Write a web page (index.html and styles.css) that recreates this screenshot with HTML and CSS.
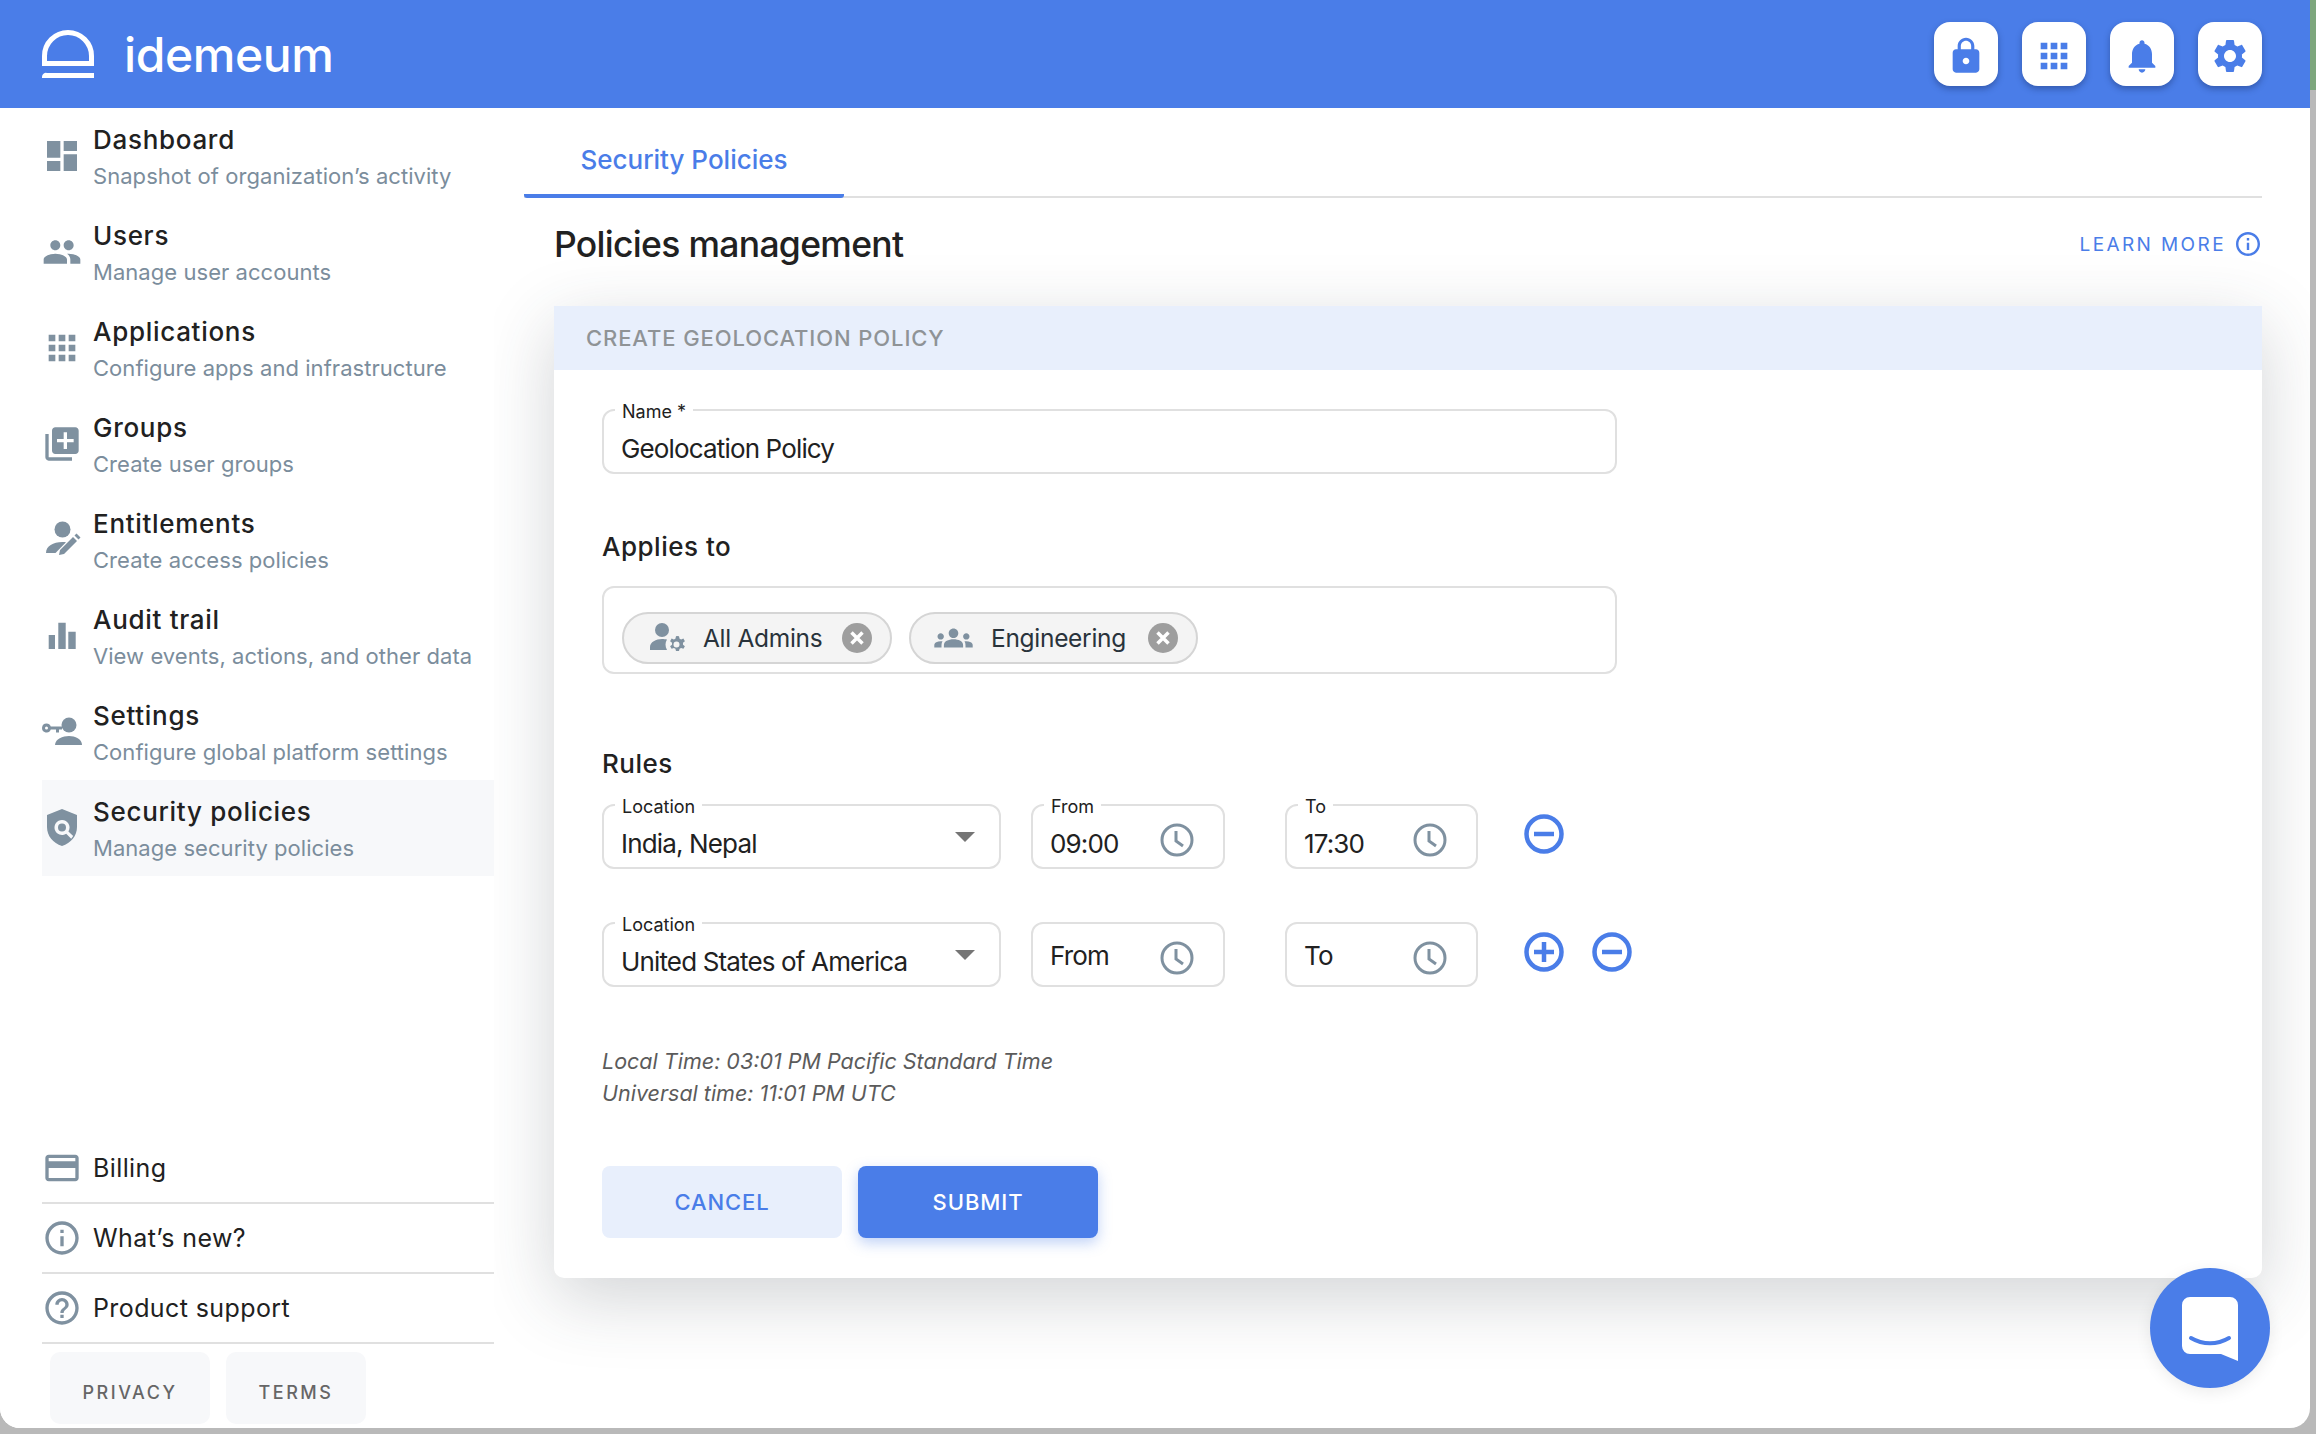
FILE: index.html
```html
<!DOCTYPE html>
<html>
<head>
  <title>idemeum - Security Policies</title>
  <link rel="stylesheet" href="styles.css">
</head>
<body>
  <div class="window">
    <header class="topbar">
      <div class="brand">
        <svg class="brand-logo" viewBox="0 0 52 48"><path d="M2.5 33.5V26a23.5 23.5 0 0 1 47 0v7.5z" fill="none" stroke="#fff" stroke-width="5"/><path d="M5 43h47v5H0v-1a4 4 0 0 1 5-4z" fill="#fff"/></svg>
        <span class="brand-name">idemeum</span>
      </div>
      <div class="top-actions">
        <button class="top-btn"><svg viewBox="0 0 24 24"><path d="M18 8h-1V6c0-2.76-2.24-5-5-5S7 3.24 7 6v2H6c-1.1 0-2 .9-2 2v10c0 1.1.9 2 2 2h12c1.1 0 2-.9 2-2V10c0-1.1-.9-2-2-2zm-6 9c-1.1 0-2-.9-2-2s.9-2 2-2 2 .9 2 2-.9 2-2 2zm3.1-9H8.9V6c0-1.71 1.39-3.1 3.1-3.1 1.71 0 3.1 1.39 3.1 3.1v2z"/></svg></button>
        <button class="top-btn"><svg viewBox="0 0 24 24"><path d="M4 8h4V4H4v4zm6 12h4v-4h-4v4zm-6 0h4v-4H4v4zm0-6h4v-4H4v4zm6 0h4v-4h-4v4zm6-10v4h4V4h-4zm-6 4h4V4h-4v4zm6 6h4v-4h-4v4zm0 6h4v-4h-4v4z"/></svg></button>
        <button class="top-btn"><svg viewBox="0 0 24 24"><path d="M12 22c1.1 0 2-.9 2-2h-4c0 1.1.89 2 2 2zm6-6v-5c0-3.07-1.64-5.64-4.5-6.32V4c0-.83-.67-1.5-1.5-1.5s-1.5.67-1.5 1.5v.68C7.63 5.36 6 7.92 6 11v5l-2 2v1h16v-1l-2-2z"/></svg></button>
        <button class="top-btn"><svg viewBox="0 0 24 24"><path d="M19.14 12.94c.04-.3.06-.61.06-.94 0-.32-.02-.64-.07-.94l2.03-1.58c.18-.14.23-.41.12-.61l-1.92-3.32c-.12-.22-.37-.29-.59-.22l-2.39.96c-.5-.38-1.03-.7-1.62-.94l-.36-2.54c-.04-.24-.24-.41-.48-.41h-3.84c-.24 0-.43.17-.47.41l-.36 2.54c-.59.24-1.13.57-1.62.94l-2.39-.96c-.22-.08-.47 0-.59.22L2.74 8.87c-.12.21-.08.47.12.61l2.03 1.58c-.05.3-.09.63-.09.94s.02.64.07.94l-2.03 1.58c-.18.14-.23.41-.12.61l1.92 3.32c.12.22.37.29.59.22l2.39-.96c.5.38 1.03.7 1.62.94l.36 2.54c.05.24.24.41.48.41h3.84c.24 0 .44-.17.47-.41l.36-2.54c.59-.24 1.13-.56 1.62-.94l2.39.96c.22.08.47 0 .59-.22l1.92-3.32c.12-.22.07-.47-.12-.61l-2.01-1.58zM12 15.6c-1.98 0-3.6-1.62-3.6-3.6s1.62-3.6 3.6-3.6 3.6 1.62 3.6 3.6-1.62 3.6-3.6 3.6z"/></svg></button>
      </div>
    </header>

    <div class="content">
      <aside class="sidebar">
        <nav class="nav">
          <a class="nav-item">
            <svg class="nav-icon" viewBox="0 0 24 24"><path d="M3 13h8V3H3v10zm0 8h8v-6H3v6zm10 0h8V11h-8v10zm0-18v6h8V3h-8z"/></svg>
            <span class="nav-text"><span class="nav-title">Dashboard</span><span class="nav-sub">Snapshot of organization’s activity</span></span>
          </a>
          <a class="nav-item">
            <svg class="nav-icon" viewBox="0 0 24 24"><path d="M16 11c1.66 0 2.99-1.34 2.99-3S17.66 5 16 5c-1.66 0-3 1.34-3 3s1.34 3 3 3zm-8 0c1.66 0 2.99-1.34 2.99-3S9.66 5 8 5C6.34 5 5 6.34 5 8s1.34 3 3 3zm0 2c-2.33 0-7 1.17-7 3.5V19h14v-2.5c0-2.33-4.67-3.5-7-3.5zm8 0c-.29 0-.62.02-.97.05 1.16.84 1.97 1.97 1.97 3.45V19h6v-2.5c0-2.33-4.67-3.5-7-3.5z"/></svg>
            <span class="nav-text"><span class="nav-title">Users</span><span class="nav-sub">Manage user accounts</span></span>
          </a>
          <a class="nav-item">
            <svg class="nav-icon" viewBox="0 0 24 24"><path d="M4 8h4V4H4v4zm6 12h4v-4h-4v4zm-6 0h4v-4H4v4zm0-6h4v-4H4v4zm6 0h4v-4h-4v4zm6-10v4h4V4h-4zm-6 4h4V4h-4v4zm6 6h4v-4h-4v4zm0 6h4v-4h-4v4z"/></svg>
            <span class="nav-text"><span class="nav-title">Applications</span><span class="nav-sub">Configure apps and infrastructure</span></span>
          </a>
          <a class="nav-item">
            <svg class="nav-icon" viewBox="0 0 24 24"><path d="M4 6H2v14c0 1.1.9 2 2 2h14v-2H4V6zm16-4H8c-1.1 0-2 .9-2 2v12c0 1.1.9 2 2 2h12c1.1 0 2-.9 2-2V4c0-1.1-.9-2-2-2zm-1 9h-4v4h-2v-4H9V9h4V5h2v4h4v2z"/></svg>
            <span class="nav-text"><span class="nav-title">Groups</span><span class="nav-sub">Create user groups</span></span>
          </a>
          <a class="nav-item">
            <svg class="nav-icon" viewBox="0 0 40 40"><circle cx="20.500" cy="9.500" r="8"/><path d="M4 33c0-7 7-11 16.500-11 1.500 0 2.500.1 3.500.3L13.500 33z"/><path d="M17 35l1-5 13-13 4 4-13 13zM32.500 15.500l2-2 4 4-2 2z"/></svg>
            <span class="nav-text"><span class="nav-title">Entitlements</span><span class="nav-sub">Create access policies</span></span>
          </a>
          <a class="nav-item">
            <svg class="nav-icon" viewBox="0 0 40 40"><path d="M6.700 19H13v14H6.700zM16.300 6.700h7.400V33h-7.400zM26.300 15.700h7.400V33h-7.400z"/></svg>
            <span class="nav-text"><span class="nav-title">Audit trail</span><span class="nav-sub">View events, actions, and other data</span></span>
          </a>
          <a class="nav-item">
            <svg class="nav-icon" viewBox="0 0 40 40"><circle cx="27" cy="13" r="7.500"/><path d="M13 33c0-6 8-9 14-9s13 3 13 9z"/><path d="M4.500 11.500a4.500 4.500 0 0 1 4.300 3h11.200v3h-3v3h-3v-3H8.800a4.500 4.500 0 1 1-4.300-6zm0 3a1.500 1.500 0 1 0 0 3 1.500 1.500 0 0 0 0-3z"/></svg>
            <span class="nav-text"><span class="nav-title">Settings</span><span class="nav-sub">Configure global platform settings</span></span>
          </a>
          <a class="nav-item active">
            <svg class="nav-icon" viewBox="0 0 40 40"><path fill-rule="evenodd" d="M20 1l15 6v12c0 9-6 16-15 19C11 35 5 28 5 19V7zm0 11a7.500 7.500 0 1 0 4.200 13.700l5 5 2-2.700-4.800-4.600A7.500 7.500 0 0 0 20 12zm0 3.500a4 4 0 1 1 0 8 4 4 0 0 1 0-8z"/></svg>
            <span class="nav-text"><span class="nav-title">Security policies</span><span class="nav-sub">Manage security policies</span></span>
          </a>
        </nav>

        <div class="side-bottom">
          <a class="side-link">
            <svg class="nav-icon" viewBox="0 0 24 24"><path d="M20 4H4c-1.110 0-1.990.89-1.990 2L2 18c0 1.110.89 2 2 2h16c1.110 0 2-.89 2-2V6c0-1.110-.89-2-2-2zm0 14H4v-6h16v6zm0-10H4V6h16v2z"/></svg>
            Billing
          </a>
          <a class="side-link">
            <svg class="nav-icon" viewBox="0 0 24 24"><path d="M11 7h2v2h-2zm0 4h2v6h-2zm1-9C6.480 2 2 6.480 2 12s4.480 10 10 10 10-4.480 10-10S17.520 2 12 2zm0 18c-4.410 0-8-3.590-8-8s3.590-8 8-8 8 3.590 8 8-3.590 8-8 8z"/></svg>
            What’s new?
          </a>
          <a class="side-link">
            <svg class="nav-icon" viewBox="0 0 24 24"><path d="M11 18h2v-2h-2v2zm1-16C6.480 2 2 6.480 2 12s4.480 10 10 10 10-4.480 10-10S17.520 2 12 2zm0 18c-4.410 0-8-3.590-8-8s3.590-8 8-8 8 3.590 8 8-3.590 8-8 8zm0-14c-2.210 0-4 1.790-4 4h2c0-1.100.9-2 2-2s2 .9 2 2c0 2-3 1.750-3 5h2c0-2.250 3-2.500 3-5 0-2.210-1.790-4-4-4z"/></svg>
            Product support
          </a>
          <div class="legal">
            <button class="legal-btn privacy">PRIVACY</button>
            <button class="legal-btn terms">TERMS</button>
          </div>
        </div>
      </aside>

      <main class="main">
        <div class="tabs"><div class="tab">Security Policies</div></div>

        <div class="title-row">
          <h1 class="page-title">Policies management</h1>
          <a class="learn-more">LEARN MORE
            <svg viewBox="2 2 20 20"><path d="M11 7h2v2h-2zm0 4h2v6h-2zm1-9C6.480 2 2 6.480 2 12s4.480 10 10 10 10-4.480 10-10S17.520 2 12 2zm0 18c-4.410 0-8-3.590-8-8s3.590-8 8-8 8 3.590 8 8-3.590 8-8 8z"/></svg>
          </a>
        </div>

        <section class="card">
          <div class="card-head">CREATE GEOLOCATION POLICY</div>
          <div class="card-body">
            <div class="field name-field">
              <span class="field-label">Name *</span>
              <span class="field-value">Geolocation Policy</span>
            </div>

            <h3 class="section-label applies">Applies to</h3>
            <div class="chips">
              <span class="chip chip-admins">
                <svg class="chip-icon" viewBox="0 0 36 32"><circle cx="12" cy="8" r="7"/><path d="M0 28v-3c0-5 6-8 12-8 2 0 3 .2 5 .6-2 3-2 7 0 10.400z"/><path fill-rule="evenodd" d="M27 14l2 .3.600 2.400 1.500.8 2.300-.9 1.500 2.600-1.900 1.500v2l1.900 1.500-1.500 2.600-2.300-.9-1.500.8-.6 2.300h-3l-.6-2.300-1.500-.8-2.300.9-1.500-2.600 1.900-1.500v-2l-1.900-1.500 1.500-2.600 2.300.9 1.500-.8.6-2.400zm-.500 5.500a3 3 0 1 0 0 6 3 3 0 0 0 0-6z"/></svg>
                <span class="chip-text">All Admins</span>
                <span class="chip-x"><svg viewBox="0 0 30 30"><path d="M9.500 9.500l11 11M20.500 9.500l-11 11"/></svg></span>
              </span>
              <span class="chip chip-eng">
                <svg class="chip-icon wide" viewBox="0 2 24 20"><path d="M12 12.750c1.630 0 3.070.39 4.240.9 1.080.48 1.760 1.560 1.760 2.730V18H6v-1.610c0-1.180.68-2.260 1.760-2.730 1.170-.52 2.610-.91 4.240-.91zM4 13c1.100 0 2-.9 2-2s-.9-2-2-2-2 .9-2 2 .9 2 2 2zm1.130 1.100c-.37-.06-.74-.1-1.130-.1-.99 0-1.930.21-2.780.58C.48 14.900 0 15.620 0 16.430V18h4.500v-1.610c0-.83.23-1.610.63-2.290zM20 13c1.100 0 2-.9 2-2s-.9-2-2-2-2 .9-2 2 .9 2 2 2zm4 3.430c0-.81-.48-1.530-1.220-1.850-.85-.37-1.790-.58-2.780-.58-.39 0-.76.04-1.130.1.4.68.63 1.460.63 2.290V18H24v-1.570zM12 6c1.660 0 3 1.340 3 3s-1.340 3-3 3-3-1.340-3-3 1.340-3 3-3z"/></svg>
                <span class="chip-text">Engineering</span>
                <span class="chip-x"><svg viewBox="0 0 30 30"><path d="M9.500 9.500l11 11M20.500 9.500l-11 11"/></svg></span>
              </span>
            </div>

            <h3 class="section-label rules-label">Rules</h3>
            <div class="rule">
              <div class="field loc-field">
                <span class="field-label">Location</span>
                <span class="field-value">India, Nepal</span>
                <span class="caret"></span>
              </div>
              <div class="field time-field from-field">
                <span class="field-label">From</span>
                <span class="field-value">09:00</span>
                <svg class="clock" viewBox="0 0 34 34"><circle cx="17" cy="17" r="15"/><path d="M16 8v10l7 5"/></svg>
              </div>
              <div class="field time-field to-field">
                <span class="field-label">To</span>
                <span class="field-value">17:30</span>
                <svg class="clock" viewBox="0 0 34 34"><circle cx="17" cy="17" r="15"/><path d="M16 8v10l7 5"/></svg>
              </div>
              <div class="rule-actions">
                <svg class="round-btn" viewBox="0 0 40 40"><circle cx="20" cy="20" r="17.500"/><path d="M10 20h20"/></svg>
              </div>
            </div>
            <div class="rule rule-two">
              <div class="field loc-field">
                <span class="field-label">Location</span>
                <span class="field-value">United States of America</span>
                <span class="caret"></span>
              </div>
              <div class="field time-field from-field empty">
                <span class="field-value">From</span>
                <svg class="clock" viewBox="0 0 34 34"><circle cx="17" cy="17" r="15"/><path d="M16 8v10l7 5"/></svg>
              </div>
              <div class="field time-field to-field empty">
                <span class="field-value">To</span>
                <svg class="clock" viewBox="0 0 34 34"><circle cx="17" cy="17" r="15"/><path d="M16 8v10l7 5"/></svg>
              </div>
              <div class="rule-actions">
                <svg class="round-btn" viewBox="0 0 40 40"><circle cx="20" cy="20" r="17.500"/><path d="M10 20h20M20 10v20"/></svg>
                <svg class="round-btn" viewBox="0 0 40 40"><circle cx="20" cy="20" r="17.500"/><path d="M10 20h20"/></svg>
              </div>
            </div>

            <p class="time-note">Local Time: 03:01 PM Pacific Standard Time<br>Universal time: 11:01 PM UTC</p>

            <div class="form-actions">
              <button class="btn btn-cancel">CANCEL</button>
              <button class="btn btn-submit">SUBMIT</button>
            </div>
          </div>
        </section>
      </main>

      <button class="chat-btn">
        <svg viewBox="0 0 56 64"><path d="M8 0h40a8 8 0 0 1 8 8v56l-17-7H8a8 8 0 0 1-8-8V8a8 8 0 0 1 8-8z" fill="#fff"/><path d="M9 41c12 7 26 7 38 0" fill="none" stroke="#4a7de8" stroke-width="4" stroke-linecap="round"/></svg>
      </button>
    </div>
  </div>
</body>
</html>
```

FILE: styles.css
```css
* {
  box-sizing: border-box;
}

body {
  margin: 0;
  width: 2316px;
  height: 1434px;
  overflow: hidden;
  background: linear-gradient(#7da67d 0, #7da67d 90px, #b9b9b9 90px);
  font-family: Inter, "Open Sans", sans-serif;
  color: #212121;
}

.window {
  width: 2310px;
  height: 1428px;
  background: #fff;
  border-radius: 0 0 20px 20px;
  overflow: hidden;
  display: flex;
  flex-direction: column;
}

/* top bar */
.topbar {
  height: 108px;
  flex: none;
  background: #4a7de8;
  display: flex;
  align-items: center;
  justify-content: space-between;
  padding: 0 48px 0 42px;
}

.brand {
  display: flex;
  align-items: center;
  gap: 30px;
}

.brand-logo {
  width: 52px;
  height: 48px;
}

.brand-name {
  color: #fff;
  font-size: 48px;
  font-weight: 500;
  letter-spacing: -0.4px;
}

.top-actions {
  display: flex;
  gap: 24px;
}

.top-btn {
  width: 64px;
  height: 64px;
  padding: 0;
  border: none;
  border-radius: 16px;
  background: #fff;
  box-shadow: 0 3px 6px rgba(20, 40, 90, 0.4);
  display: flex;
  align-items: center;
  justify-content: center;
}

.top-btn svg {
  width: 40px;
  height: 40px;
  margin-top: 4px;
  fill: #4a7de8;
}

.content {
  flex: 1;
  display: flex;
  position: relative;
  min-height: 0;
}

/* sidebar */
.sidebar {
  width: 494px;
  flex: none;
  padding-left: 42px;
  background: #fff;
  position: relative;
  z-index: 1;
  display: flex;
  flex-direction: column;
  justify-content: space-between;
}

.nav-item {
  height: 96px;
  display: flex;
  align-items: center;
  gap: 11px;
}

.nav-item.active {
  background: #f7f8fa;
}

.nav-icon {
  width: 40px;
  height: 40px;
  flex: none;
  fill: #7f91a0;
}

.nav-text {
  display: flex;
  flex-direction: column;
  padding-top: 3px;
}

.nav-title {
  font-size: 26px;
  line-height: 36px;
  font-weight: 500;
  letter-spacing: 0.7px;
}

.nav-sub {
  font-size: 22px;
  line-height: 36px;
  color: #7b8d9c;
  letter-spacing: 0.05px;
}

.side-link {
  height: 70px;
  display: flex;
  align-items: center;
  gap: 11px;
  border-bottom: 2px solid #e0e0e0;
  font-size: 25px;
  letter-spacing: 0.4px;
}

.legal {
  display: flex;
  gap: 16px;
  padding: 8px 0 4px 8px;
}

.legal-btn {
  height: 72px;
  border: none;
  border-radius: 10px;
  background: #f7f8fa;
  color: #666;
  font-family: inherit;
  font-size: 18px;
  font-weight: 500;
  letter-spacing: 2.5px;
  padding: 8px 0 0;
}

.privacy {
  width: 160px;
}

.terms {
  width: 140px;
}

/* main column */
.main {
  flex: 1;
  min-width: 0;
  padding: 0 48px 0 30px;
}

.tabs {
  height: 90px;
  border-bottom: 2px solid #e0e0e0;
}

.tab {
  width: 320px;
  height: 90px;
  border-bottom: 4px solid #4a7de8;
  border-radius: 0 0 3px 3px;
  text-align: center;
  line-height: 104px;
  color: #4a7de8;
  font-size: 26px;
  font-weight: 500;
}

.title-row {
  height: 108px;
  margin-left: 30px;
  padding-bottom: 16px;
  display: flex;
  align-items: center;
  justify-content: space-between;
}

.page-title {
  margin: 0;
  font-size: 35.5px;
  font-weight: 500;
  letter-spacing: -0.7px;
}

.learn-more {
  display: flex;
  align-items: center;
  gap: 10px;
  color: #4a7de8;
  font-size: 19px;
  font-weight: 400;
  letter-spacing: 2.4px;
  padding-right: 2px;
}

.learn-more svg {
  width: 24px;
  height: 24px;
  fill: #4a7de8;
}

.card {
  margin-left: 30px;
  background: #fff;
  border-radius: 0 0 10px 10px;
  box-shadow: 0 20px 70px rgba(50, 60, 70, 0.22);
}

.card-head {
  height: 64px;
  background: #e8effc;
  padding-left: 32px;
  line-height: 64px;
  font-size: 22px;
  font-weight: 500;
  color: #8f9396;
  letter-spacing: 0.9px;
}

.card-body {
  padding: 39px 48px 40px;
}

.field {
  position: relative;
  height: 65px;
  border: 2px solid #e0e0e0;
  border-radius: 12px;
  background: #fff;
  padding: 0 17px;
  display: flex;
  align-items: center;
}

.field-label {
  position: absolute;
  left: 11px;
  top: -9px;
  padding: 0 7px;
  background: #fff;
  font-size: 18px;
  line-height: 20px;
}

.field-value {
  font-size: 26px;
  letter-spacing: -0.85px;
  padding-top: 14px;
}

.empty .field-value {
  padding-top: 2px;
}

.name-field {
  width: 1015px;
}

.section-label {
  margin: 0;
  font-size: 26px;
  line-height: 32px;
  font-weight: 500;
  letter-spacing: 0.5px;
}

.applies {
  margin-top: 57px;
}

.chips {
  width: 1015px;
  height: 88px;
  margin-top: 23px;
  border: 2px solid #e0e0e0;
  border-radius: 12px;
  padding: 24px 0 0 18px;
  display: flex;
  gap: 17px;
}

.chip {
  height: 52px;
  border: 2px solid #d5d5d5;
  border-radius: 26px;
  background: #f4f4f4;
  display: flex;
  align-items: center;
}

.chip-admins {
  width: 270px;
  padding-left: 26px;
}

.chip-eng {
  width: 289px;
  padding-left: 22px;
}

.chip-icon {
  width: 36px;
  height: 32px;
  fill: #7f91a0;
  flex: none;
}

.chip-icon.wide {
  width: 41px;
}

.chip-text {
  flex: 1;
  margin-left: 17px;
  font-size: 24.5px;
  color: #29333b;
  letter-spacing: -0.3px;
}

.chip-x {
  width: 30px;
  height: 30px;
  margin-right: 18px;
  border-radius: 50%;
  background: #9e9e9e;
  flex: none;
}

.chip-x svg {
  display: block;
  width: 30px;
  height: 30px;
  fill: none;
  stroke: #fff;
  stroke-width: 3.5;
}

.rules-label {
  margin-top: 74px;
}

.rule {
  margin-top: 24px;
  display: flex;
  align-items: center;
}

.rule-two {
  margin-top: 53px;
}

.loc-field {
  width: 399px;
}

.time-field {
  width: 194px;
}

.from-field {
  margin: 0 60px 0 30px;
}

.to-field {
  width: 193px;
}

.caret {
  position: absolute;
  right: 24px;
  top: 26px;
  border-left: 10px solid transparent;
  border-right: 10px solid transparent;
  border-top: 10px solid #757575;
}

.clock {
  position: absolute;
  right: 29px;
  top: 17px;
  width: 34px;
  height: 34px;
  fill: none;
  stroke: #7f91a0;
  stroke-width: 3;
}

.rule-actions {
  display: flex;
  gap: 28px;
  margin-left: 46px;
  margin-top: -5px;
}

.round-btn {
  width: 40px;
  height: 40px;
  fill: none;
  stroke: #4a7de8;
  stroke-width: 4.5;
}

.time-note {
  margin: 58px 0 0;
  font-size: 21.5px;
  line-height: 32px;
  font-style: italic;
  color: #5b5b5b;
}

.form-actions {
  margin-top: 57px;
  display: flex;
  gap: 16px;
}

.btn {
  width: 240px;
  height: 72px;
  border: none;
  border-radius: 8px;
  font-family: inherit;
  font-size: 22px;
  font-weight: 500;
  letter-spacing: 0.9px;
}

.btn-cancel {
  background: #e8effc;
  color: #4a7de8;
}

.btn-submit {
  background: #4a7de8;
  color: #fff;
  box-shadow: 0 5px 14px rgba(74, 125, 232, 0.35);
}

/* floats over the page corner */
.chat-btn {
  position: absolute;
  left: 2150px;
  top: 1160px;
  width: 120px;
  height: 120px;
  padding: 0;
  border: none;
  border-radius: 50%;
  background: #4a7de8;
  box-shadow: 0 4px 16px rgba(0, 0, 0, 0.08);
  display: flex;
  align-items: center;
  justify-content: center;
  z-index: 2;
}

.chat-btn svg {
  width: 56px;
  height: 64px;
  margin-top: 2px;
}
```
